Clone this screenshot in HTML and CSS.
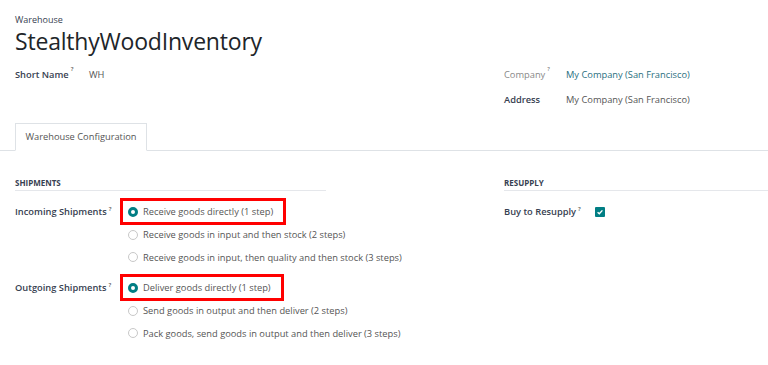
FILE: index.html
```html
<!DOCTYPE html>
<html>
<head>
    <meta charset="utf-8">
    <title>Warehouse</title>
    <link rel="stylesheet" href="styles.css">
</head>
<body>
    <div class="sheet">
        <div class="overline">Warehouse</div>
        <h1 class="title">StealthyWoodInventory</h1>

        <div class="top">
            <div class="top_left">
                <div class="field">
                    <span class="label">Short Name<sup>?</sup></span>
                    <span class="value">WH</span>
                </div>
            </div>
            <div class="top_right">
                <div class="field">
                    <span class="label muted">Company<sup>?</sup></span>
                    <span class="value link">My Company (San Francisco)</span>
                </div>
                <div class="field">
                    <span class="label">Address</span>
                    <span class="value">My Company (San Francisco)</span>
                </div>
            </div>
        </div>
    </div>

    <div class="tabs">
        <div class="tab">Warehouse Configuration</div>
    </div>

    <div class="groups">
        <div class="group group_left">
            <div class="separator">SHIPMENTS</div>

            <div class="row">
                <span class="label">Incoming Shipments<sup>?</sup></span>
                <div class="options">
                    <div class="option highlight">
                        <div class="radio checked"></div>
                        <span>Receive goods directly (1 step)</span>
                    </div>
                    <div class="option">
                        <div class="radio"></div>
                        <span>Receive goods in input and then stock (2 steps)</span>
                    </div>
                    <div class="option">
                        <div class="radio"></div>
                        <span>Receive goods in input, then quality and then stock (3 steps)</span>
                    </div>
                </div>
            </div>

            <div class="row">
                <span class="label">Outgoing Shipments<sup>?</sup></span>
                <div class="options">
                    <div class="option highlight">
                        <div class="radio checked"></div>
                        <span>Deliver goods directly (1 step)</span>
                    </div>
                    <div class="option">
                        <div class="radio"></div>
                        <span>Send goods in output and then deliver (2 steps)</span>
                    </div>
                    <div class="option">
                        <div class="radio"></div>
                        <span>Pack goods, send goods in output and then deliver (3 steps)</span>
                    </div>
                </div>
            </div>
        </div>

        <div class="group group_right">
            <div class="separator">RESUPPLY</div>
            <div class="row">
                <span class="label wide">Buy to Resupply<sup>?</sup></span>
                <div class="checkbox">
                    <svg width="10" height="10" viewBox="0 0 10 10">
                        <path d="M2.6 5.2 L4.3 6.8 L7.4 3.4" fill="none" stroke="#fff" stroke-width="1.4"/>
                    </svg>
                </div>
            </div>
        </div>
    </div>
</body>
</html>
```

FILE: styles.css
```css
html,body,h1,div,span {
	margin: 0;
	padding: 0;
}

body {
	font-family: "Open Sans", "Liberation Sans", sans-serif;
	font-size: 9.3px;
	color: #374151;
	background: #fff;
}

sup {
	font-size: 6px;
	vertical-align: top;
	position: relative;
	top: -3px;
	margin-left: 2px;
	color: #555;
}

.sheet {
	padding: 14px 15px 0 15px;
}

.overline {
	font-size: 9px;
	color: #374151;
	line-height: 12px;
}

.title {
	font-size: 23px;
	font-weight: 400;
	color: #212529;
	line-height: 30px;
	letter-spacing: -0.2px;
}

.top {
	display: grid;
	grid-template-columns: 489px 1fr;
	margin-top: 11px;
}

.field {
	display: flex;
	align-items: center;
	height: 14px;
	margin-bottom: 11px;
}

.label {
	font-weight: 600;
	color: #374151;
	width: 74px;
	flex-shrink: 0;
}
.top_right .label {
	width: 62px;
}
.label.muted {
	color: #888;
	font-weight: 400;
}
.value {
	color: #555;
}
.value.link {
	color: #2a6f80;
}

.tabs {
	margin-top: 7px;
	height: 26px;
	border-bottom: 1px solid #dee2e6;
	padding-left: 15px;
	display: flex;
	align-items: flex-end;
}
.tab {
	width: 130px;
	height: 26px;
	border: 1px solid #dee2e6;
	border-bottom: 1px solid #fff;
	margin-bottom: -1px;
	background: #fff;
	color: #555;
	text-align: center;
	line-height: 26px;
}

.groups {
	display: grid;
	grid-template-columns: 489px 1fr;
	padding: 26px 0 0 15px;
}

.separator {
	font-size: 8px;
	font-weight: 700;
	color: #374151;
	border-bottom: 1px solid #e5e7eb;
	padding-bottom: 2px;
	line-height: 11px;
	margin-bottom: 10px;
}
.group_left .separator {
	width: 311px;
}

.row {
	display: flex;
	align-items: flex-start;
	margin-bottom: 8.5px;
}
.row .label {
	width: 108px;
	line-height: 22px;
	height: 22px;
}
.row .label.wide {
	width: 91px;
}

.options {
	display: flex;
	flex-direction: column;
}
.option {
	display: flex;
	align-items: center;
	height: 22.5px;
	color: #555;
	padding: 0 10px 0 5px;
	white-space: nowrap;
	width: fit-content;
}
.option.highlight {
	outline: 3px solid #f00;
	height: 21px;
	margin-bottom: 1.5px;
	margin-top: 0;
}

.radio {
	width: 8px;
	height: 8px;
	border: 1px solid #c8c8c8;
	border-radius: 50%;
	margin-right: 5px;
	flex-shrink: 0;
}
.radio.checked {
	width: 4px;
	height: 4px;
	border: 3px solid #017e84;
}

.checkbox {
	width: 10px;
	height: 10px;
	background: #017e84;
	border-radius: 1px;
	margin-top: 6px;
}
```
